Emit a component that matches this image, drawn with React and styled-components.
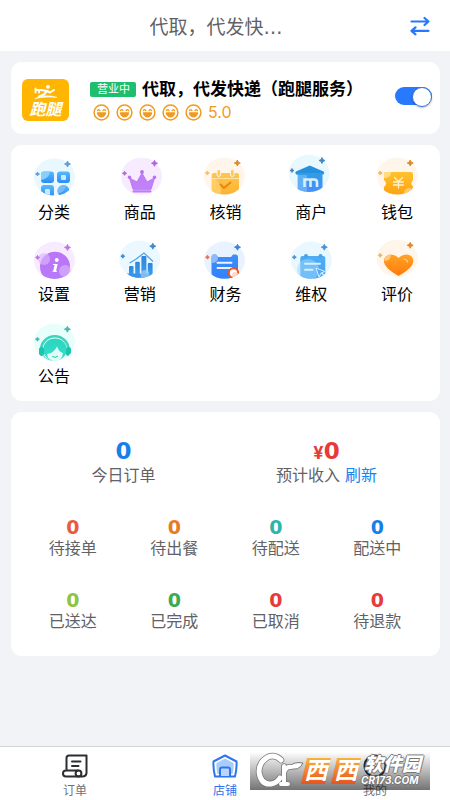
import React, { useState } from "react";
import styled, { createGlobalStyle } from "styled-components";

const GlobalStyle = createGlobalStyle`
  * {
    box-sizing: border-box;
  }
  body {
    margin: 0;
    background: #f2f3f6;
    font-family: Inter, "Noto Sans CJK SC", sans-serif;
    color: #000;
  }
  button {
    border: 0;
    padding: 0;
    background: none;
    font: inherit;
    color: inherit;
    cursor: pointer;
  }
  h1, h2, p {
    margin: 0;
  }
  svg {
    display: block;
  }
`;

/* small four-point star */
const Spark = ({ x, y, r, color }) => (
  <path
    d={`M${x} ${y - r}Q${x + 0.4} ${y - 0.4} ${x + r} ${y}Q${x + 0.4} ${y + 0.4} ${x} ${y + r}Q${x - 0.4} ${y + 0.4} ${x - r} ${y}Q${x - 0.4} ${y - 0.4} ${x} ${y - r}Z`}
    fill={color}
    stroke={color}
    strokeWidth="0.9"
  />
);

const Bubble = ({ id, cx, cy, bg, from, to, spark, small, children }) => (
  <svg width="44" height="44" viewBox="0 0 44 44" aria-hidden="true">
    <defs>
      <linearGradient id={`${id}-g`} x1="0" y1="0" x2="0" y2="1">
        <stop offset="0" stopColor={from} />
        <stop offset="1" stopColor={to} />
      </linearGradient>
      <clipPath id={`${id}-c`}>
        <ellipse cx={cx} cy={cy} rx="20.5" ry="18.6" />
      </clipPath>
    </defs>
    <ellipse cx={cx} cy={cy} rx="20.5" ry="18.6" fill={bg} />
    <g clipPath={`url(#${id}-c)`}>{children}</g>
    <Spark x={cx + 13} y={cy - 13} r={3} color={spark} />
    <Spark x={cx - 17} y={cy - 3} r={2} color={small || spark} />
  </svg>
);

const CategoryIcon = () => (
  <Bubble id="category" cx={22.5} cy={22} bg="#e9f8fe" from="#5ab8fb" to="#2b8df5" spark="#5c9fd8">
    <rect x="9" y="16.5" width="13" height="11.5" rx="3" fill="url(#category-g)" />
    <path d="M9 19.5Q9 16.5 12 16.5H18Q17 24 9 25Z" fill="#86d0fd" />
    <rect x="25" y="16.5" width="13" height="11.5" rx="3" fill="url(#category-g)" />
    <rect x="29" y="20" width="5" height="5" rx="1" fill="#c9e9fd" />
    <rect x="9" y="30" width="13" height="13" rx="3" fill="url(#category-g)" />
    <rect x="13" y="34" width="5" height="6" rx="1" fill="#c9e9fd" />
    <circle cx="31.5" cy="36" r="6" fill="url(#category-g)" />
    <path d="M25.5 36A6 6 0 0 1 34 30.5Q33 37 26 38.500Z" fill="#77bdf5" />
  </Bubble>
);

const ProductIcon = () => (
  <Bubble id="product" cx={23.5} cy={21.3} bg="#f7ebff" from="#c27cf2" to="#bf83fb" spark="#b165e0">
    <path d="M11.5 23L19 27L24 18L29 27L36.5 23L33 34.3H15Z" fill="url(#product-g)" stroke="#be79f3" strokeLinejoin="round" />
    <circle cx="11.5" cy="22.3" r="1.7" fill="#b96fe9" />
    <circle cx="24" cy="17" r="1.9" fill="#b96fe9" />
    <circle cx="36.5" cy="22.3" r="1.7" fill="#b96fe9" />
    <rect x="14.5" y="35.3" width="19" height="2.2" rx="1.1" fill="#bd7cf8" />
  </Bubble>
);

const VerifyIcon = () => (
  <Bubble id="verify" cx={21.3} cy={21} bg="#fff5eb" from="#ffc64f" to="#fcaf2d" spark="#d98b2d" small="#f8bd67">
    <rect x="8.7" y="18" width="27.3" height="26" rx="2" fill="url(#verify-g)" />
    <path d="M9 23.5H36" stroke="#ffe2a5" strokeWidth="1.2" />
    <path d="M9 24H13Q20 32 17 41H9Z" fill="#ffd474" opacity="0.7" />
    <rect x="14" y="14.5" width="3.6" height="7" rx="1.8" fill="#ffc756" stroke="#fff5eb" />
    <rect x="27.5" y="14.5" width="3.6" height="7" rx="1.8" fill="#ffc756" stroke="#fff5eb" />
    <path d="M17.5 29.5L21 33L27.5 27.5" fill="none" stroke="#e9870f" strokeWidth="2" strokeLinecap="round" strokeLinejoin="round" />
  </Bubble>
);

const MerchantIcon = () => (
  <Bubble id="merchant" cx={20} cy={18.5} bg="#e9f8fe" from="#329ce4" to="#4d8efa" spark="#4583bd">
    <path d="M20.7 10.5L34.5 16.5Q36 17.5 34.5 19.5H7Q5.5 17.5 7 16.5Z" fill="#2690df" />
    <rect x="8.7" y="18" width="24.8" height="20" fill="url(#merchant-g)" />
    <path d="M9 20H18V38H9Z" fill="#8fd0ff" opacity="0.45" />
    <path d="M15.5 32V24.5H25Q28 24.5 28 27V32M21.5 25V32" fill="none" stroke="#d9efff" strokeWidth="2.600" />
  </Bubble>
);

const WalletIcon = () => (
  <Bubble id="wallet" cx={22.2} cy={21} bg="#fff5ea" from="#ffc22e" to="#fda00d" spark="#d98b2d" small="#f8b154">
    <path d="M11 17H36Q38 17 38 19V25Q34.5 28.5 38 31.5V42H9V32Q13 28.5 9 25V19Q9 17 11 17Z" fill="url(#wallet-g)" />
    <path d="M9 19Q9 17 11 17H16Q16 23 9 23Z" fill="#ffdc80" />
    <circle cx="34" cy="38" r="5" fill="#ffcb69" />
    <path d="M19.5 22.5L23.5 26.5L27.5 22.5M23.5 26.5V33M18.5 27H28.5M18.5 30H28.5" fill="none" stroke="#fff1cf" strokeWidth="1.3" strokeLinecap="round" />
  </Bubble>
);

const SettingsIcon = () => (
  <Bubble id="settings" cx={22.5} cy={23.4} bg="#f7ebff" from="#bd74f6" to="#b47bfb" spark="#bb73e5">
    <circle cx="23" cy="29.7" r="15" fill="url(#settings-g)" />
    <circle cx="12" cy="22" r="6" fill="#dbb6fc" opacity="0.65" />
    <circle cx="33" cy="34" r="6" fill="#dbb6fc" opacity="0.65" />
    <circle cx="24.8" cy="23" r="1.9" fill="#fff" />
    <path d="M24.3 27L22.5 34.5" fill="none" stroke="#fff" strokeWidth="2.8" />
    <path d="M21 27.5H24.5M20.5 34.3H25" fill="none" stroke="#fff" strokeWidth="1.1" />
  </Bubble>
);

const MarketingIcon = () => (
  <Bubble id="marketing" cx={21.8} cy={22.2} bg="#ebf8ff" from="#2d86dc" to="#43a4f6" spark="#3989d9">
    <rect x="11" y="29" width="4.5" height="14" rx="1" fill="url(#marketing-g)" />
    <rect x="17.2" y="24.7" width="4.6" height="18" rx="1" fill="url(#marketing-g)" />
    <rect x="23.4" y="19" width="5" height="24" rx="1" fill="url(#marketing-g)" />
    <rect x="29.8" y="26" width="4.8" height="16" rx="1" fill="url(#marketing-g)" />
    <path d="M8 36.5H37V44H8Z" fill="#3a91e8" />
    <circle cx="27" cy="37.5" r="4.5" fill="#9bd0f8" opacity="0.7" />
    <path d="M11.5 26L17.5 22.5L26 16L35 24.5" fill="none" stroke="#4ba1e4" strokeWidth="1.2" />
  </Bubble>
);

const FinanceIcon = () => (
  <Bubble id="finance" cx={21.5} cy={23.2} bg="#e9f3ff" from="#3e8dfa" to="#2f80ff" spark="#3b7fdb" small="#ec714b">
    <path d="M10.5 17.5H13L15 20H28L30 17.5H32.5Q35 17.5 35 20V44H8.5V20Q8.5 17.5 10.5 17.5Z" fill="url(#finance-g)" />
    <path d="M8.5 20Q8.5 17.5 10.5 17.5H13L15 20Q15 26 8.5 26Z" fill="#8fbaf9" />
    <path d="M14.5 25.7H28.5M14.5 31H28.5" stroke="#eaf4ff" strokeWidth="2" strokeLinecap="round" />
    <circle cx="30.5" cy="36" r="4.7" fill="#fff" stroke="#f15421" strokeWidth="2" />
    <circle cx="32" cy="38" r="3" fill="#ffd8c7" />
  </Bubble>
);

const RightsIcon = () => (
  <Bubble id="rights" cx={22.3} cy={23.2} bg="#e9f8fe" from="#4facf4" to="#46a2fa" spark="#4793d4">
    <rect x="11.3" y="19" width="25" height="25" rx="2" fill="url(#rights-g)" />
    <circle cx="17" cy="19" r="2" fill="#49a3e9" />
    <circle cx="31.5" cy="19" r="2" fill="#49a3e9" />
    <circle cx="19" cy="33" r="11" fill="#9fd7fb" opacity="0.5" />
    <path d="M16 26.7H31M16 32.7H23.5" stroke="#d5efff" strokeWidth="2" strokeLinecap="round" />
    <path d="M27 31L36 34.5L32 36L30 40Z" fill="#53a8f5" stroke="#d5efff" strokeLinejoin="round" />
    <path d="M32.5 36L36 39" stroke="#d5efff" strokeWidth="1.5" />
  </Bubble>
);

const RatingIcon = () => (
  <Bubble id="rating" cx={22.2} cy={21.3} bg="#fff5ea" from="#ffa326" to="#ff7a0c" spark="#d98b2d" small="#f8b154">
    <path d="M23.5 39Q9 30.5 9 24.5Q9 18 15.5 17.5Q20.5 17.5 23.5 21Q27 17.5 31.5 17.5Q38.3 18 38.3 24.5Q38 31 23.5 39Z" fill="url(#rating-g)" />
    <path d="M10 20Q12.5 17.5 16 17.5Q16 23.5 9.5 24Z" fill="#ffc77f" />
    <path d="M29 22Q32 22.5 32.5 25" fill="none" stroke="#ffd39b" strokeWidth="1.2" strokeLinecap="round" />
  </Bubble>
);

const NoticeIcon = () => (
  <Bubble id="notice" cx={22.4} cy={23.2} bg="#e8fefb" from="#2bd5bd" to="#36dfcb" spark="#48b9ac">
    <path d="M9 31A13.8 13.8 0 0 1 36.6 31" fill="none" stroke="#3fd2bd" strokeWidth="2.5" />
    <ellipse cx="23" cy="30.5" rx="11.8" ry="11" fill="url(#notice-g)" />
    <path d="M15 35Q22 34 25 27.5Q27 33 31 34Q30 42 23 42Q16 42 15 35Z" fill="#dffdf8" />
    <rect x="7" y="28" width="5" height="9" rx="2.5" fill="#1cc5ae" />
    <rect x="34" y="28" width="5" height="9" rx="2.5" fill="#1cc5ae" />
    <path d="M11 36Q14 41 20 41.5" fill="none" stroke="#67dacb" strokeWidth="1.2" />
    <path d="M20.5 37.5Q23 39.5 25.5 37.5" fill="none" stroke="#2bbda9" strokeLinecap="round" />
  </Bubble>
);

const SwapIcon = () => (
  <svg width="20" height="20" viewBox="0 0 20 20" fill="none" stroke="#2878fb" strokeWidth="2.2" strokeLinecap="round" strokeLinejoin="round">
    <path d="M1.5 5.5H18.5L14.5 2M18.5 5.5L14.5 9" />
    <path d="M18.5 14.8H1.5L5.5 11.3M1.5 14.8L5.5 18.3" />
  </svg>
);

const Smile = () => (
  <svg width="17" height="17" viewBox="0 0 17 17" fill="none" stroke="#f29a1f" aria-hidden="true">
    <circle cx="8.5" cy="8.5" r="7.4" strokeWidth="1.5" />
    <path d="M4.5 6.6Q5.7 4.8 6.9 6.6M10.1 6.6Q11.3 4.8 12.5 6.6" strokeWidth="1.3" strokeLinecap="round" />
    <path d="M4.2 8.8H12.8Q12 13 8.5 13Q5 13 4.2 8.8Z" fill="#f29a1f" />
  </svg>
);

const RunnerIcon = () => (
  <svg width="26" height="16" viewBox="0 0 26 16" fill="none" stroke="#fff" strokeLinecap="round" strokeLinejoin="round">
    <circle cx="15" cy="2.8" r="2" fill="#fff" stroke="none" />
    <path d="M8 6L14 7L11 10.5L6 12.5M14 7L17 8.5L21 6" strokeWidth="2" />
    <path d="M2.5 4.5V8.5M2.5 6H8M6 6V8.5" strokeWidth="1.8" />
    <path d="M2 14.5Q13 9.5 24 13.5Q14 12 2 14.5Z" fill="#fff" strokeWidth="0.6" />
  </svg>
);

const OrderIcon = () => (
  <svg width="26" height="24" viewBox="0 0 26 24" fill="none" stroke="#2b2d30" strokeWidth="2" strokeLinecap="round" strokeLinejoin="round">
    <path d="M4.500 16V4Q4.500 1.500 7 1.500H24.500V19Q24 22.500 20.500 22.500H4Q1 22.500 1 19.500Q1 16.500 4 16.500H16" />
    <circle cx="16.5" cy="19.5" r="2.9" />
    <path d="M10 7.5H18.5M10 12H16.5" />
  </svg>
);

const ShopIcon = () => (
  <svg width="26" height="24" viewBox="0 0 26 24" fill="none" stroke="#2f75ec" strokeWidth="2" strokeLinecap="round" strokeLinejoin="round">
    <path d="M13 1.5L24.5 7.5Q25 14 23 22.5H3Q1 14 1.5 7.5Z" fill="#fff" />
    <path d="M13 4.5L21.5 9Q22 15 20.5 20H5.5Q4 15 4.5 9Z" fill="#a9cdfb" stroke="none" />
    <path d="M8 22V15.5Q8 13.5 10 13.5H16Q18 13.5 18 15.5V22" fill="#b9d7fc" />
  </svg>
);

const MineIcon = () => (
  <svg width="26" height="24" viewBox="0 0 26 24" fill="none" stroke="#2b2d30" strokeWidth="2">
    <circle cx="13" cy="12" r="10.5" />
    <circle cx="13" cy="9.5" r="3.8" />
    <path d="M6 19Q8 14.5 13 14.5Q18 14.5 20 19" />
  </svg>
);

const Page = styled.div`
  min-height: 100vh;
  display: flex;
  flex-direction: column;
`;

const Header = styled.header`
  height: 51px;
  padding: 0 20px;
  display: grid;
  grid-template-columns: 20px 1fr 20px;
  align-items: center;
  background: #fff;
`;

const PageTitle = styled.h1`
  padding-right: 18px;
  padding-top: 4px;
  text-align: center;
  font-size: 19px;
  line-height: 28px;
  font-weight: 400;
  color: #5f6165;
  span {
    font-family: "DejaVu Sans", sans-serif;
  }
`;

const Main = styled.main`
  flex: 1;
  padding: 11px 10px 11px 11px;
  display: flex;
  flex-direction: column;
  gap: 11px;
`;

const Card = styled.section`
  background: #fff;
  border-radius: 11px;
`;

const ShopCard = styled(Card)`
  height: 72px;
  padding: 4px 8px 0 11px;
  display: flex;
  align-items: center;
`;

const ShopLogo = styled.div`
  width: 47px;
  height: 42px;
  padding-top: 5px;
  flex: none;
  display: flex;
  flex-direction: column;
  align-items: center;
  border-radius: 6px;
  background: #ffb501;
  color: #fff;
  span {
    font-size: 16px;
    line-height: 18px;
    font-weight: 700;
    font-style: italic;
  }
`;

const ShopInfo = styled.div`
  flex: 1;
  min-width: 0;
  margin-left: 21px;
`;

const NameLine = styled.div`
  display: flex;
  align-items: center;
  gap: 6px;
  white-space: nowrap;
`;

const OpenTag = styled.span`
  padding: 0 6px 0 7px;
  border-radius: 2px;
  background: #1ebe6e;
  color: #fff;
  font-size: 11px;
  line-height: 15px;
`;

const ShopName = styled.h2`
  font-size: 17px;
  line-height: 24px;
`;

const Rating = styled.div`
  padding-left: 3px;
  display: flex;
  align-items: center;
  gap: 6px;
  color: #f29a1f;
  font-size: 16px;
  line-height: 22px;
`;

const Switch = styled.input`
  appearance: none;
  width: 37px;
  height: 18px;
  margin: 0 0 8px;
  flex: none;
  display: flex;
  justify-content: ${({ checked }) => (checked ? "flex-end" : "flex-start")};
  border-radius: 9px;
  background: ${({ checked }) => (checked ? "#2979ff" : "#e4e5e8")};
  cursor: pointer;
  &::before {
    content: "";
    width: 18px;
    height: 18px;
    border: 1px solid ${({ checked }) => (checked ? "#3677da" : "#c8c9cc")};
    border-radius: 50%;
    background: #fff;
    box-shadow: 0 1px 2px rgba(0, 0, 0, 0.25);
  }
`;

const MenuGrid = styled(Card)`
  padding-top: 10px;
  display: grid;
  grid-template-columns: repeat(5, 1fr);
`;

const MenuItem = styled.button`
  height: 82px;
  display: flex;
  flex-direction: column;
  align-items: center;
  gap: 1px;
  font-size: 16px;
  line-height: 24px;
`;

const StatsCard = styled(Card)`
  padding: 26px 12px 24px 11px;
`;

const StatsRow = styled.div`
  display: grid;
  grid-template-columns: repeat(${({ $cols }) => $cols}, 1fr);
  margin-top: ${({ $top }) => $top || 0}px;
`;

const Stat = styled.div`
  text-align: center;
  font-size: 16px;
  line-height: 22px;
  color: #606266;
`;

const StatValue = styled.p`
  height: ${({ $big }) => ($big ? 26 : 20)}px;
  font-family: "DejaVu Sans", sans-serif;
  font-size: ${({ $big }) => ($big ? 23 : 19)}px;
  line-height: ${({ $big }) => ($big ? 26 : 20)}px;
  font-weight: 700;
  color: ${({ $color }) => $color};
  small {
    font-family: Inter, sans-serif;
    font-size: 18px;
    line-height: 18px;
  }
`;

const Refresh = styled.button`
  margin-left: 5px;
  color: #1683ee;
`;

const TabBar = styled.nav`
  position: relative;
  height: 54px;
  display: grid;
  grid-template-columns: repeat(3, 1fr);
  border-top: 1px solid #d3d4d6;
  background: #fff;
`;

const Tab = styled.a`
  padding-top: 7px;
  display: flex;
  flex-direction: column;
  align-items: center;
  gap: 4px;
  font-size: 12px;
  line-height: 18px;
  text-decoration: none;
  color: ${({ $active }) => ($active ? "#2f75ec" : "#707276")};
`;

/* translucent stamp over the right end of the tab bar */
const Watermark = styled.div`
  position: absolute;
  right: 20px;
  top: 5px;
  width: 180px;
  height: 38px;
  padding-left: 6px;
  display: flex;
  align-items: center;
  background: linear-gradient(rgba(0, 0, 0, 0), rgba(0, 0, 0, 0.55));
  pointer-events: none;
`;

const OrangeBlock = styled.span`
  width: 30px;
  height: 26px;
  display: flex;
  align-items: center;
  justify-content: center;
  clip-path: polygon(20% 0, 100% 0, 80% 100%, 0 100%);
  background: linear-gradient(#f7b33c, #e8541f);
  color: #fff;
  font-size: 24px;
  line-height: 26px;
  font-weight: 700;
  font-style: italic;
`;

const Brand = styled.div`
  height: 32px;
  display: flex;
  flex-direction: column;
  color: #fff;
  font-weight: 700;
  font-style: italic;
  white-space: nowrap;
  text-shadow: 1px 0 #777, -1px 0 #777, 0 1px #777, 0 -1px #777;
  strong {
    padding-left: 3px;
    font-size: 19px;
    line-height: 20px;
  }
  span {
    font-size: 10px;
    line-height: 10px;
  }
`;

const BrandMark = () => (
  <svg width="45" height="38" viewBox="0 0 45 38" fill="none" strokeLinecap="round" overflow="visible">
    <g stroke="#777">
      <path d="M25 8Q19 2 12 5Q3 10 3 20Q5 33 15 32Q21 31 24 26" strokeWidth="6.5" />
      <path d="M28 14V31M25 32H32M28 21Q30 14 35 15" strokeWidth="5.5" />
      <path d="M33 16Q36 9 47 11Q43 20 33 16Z" fill="#fff" />
    </g>
    <g stroke="#fff">
      <path d="M25 8Q19 2 12 5Q3 10 3 20Q5 33 15 32Q21 31 24 26" strokeWidth="5" />
      <path d="M28 14V31M25 32H32M28 21Q30 14 35 15" strokeWidth="4" />
    </g>
  </svg>
);

const menu = [
  ["分类", CategoryIcon],
  ["商品", ProductIcon],
  ["核销", VerifyIcon],
  ["商户", MerchantIcon],
  ["钱包", WalletIcon],
  ["设置", SettingsIcon],
  ["营销", MarketingIcon],
  ["财务", FinanceIcon],
  ["维权", RightsIcon],
  ["评价", RatingIcon],
  ["公告", NoticeIcon],
];

const statRows = [
  [
    ["待接单", "#e85b3f"],
    ["待出餐", "#e67c27"],
    ["待配送", "#2bb5ac"],
    ["配送中", "#167fea"],
  ],
  [
    ["已送达", "#8fc442"],
    ["已完成", "#3cab50"],
    ["已取消", "#e63b3a"],
    ["待退款", "#e63b3a"],
  ],
];

const App = () => {
  const [open, setOpen] = useState(true);

  return (
    <Page>
      <GlobalStyle />
      <Header>
        <i />
        <PageTitle>
          代取，代发快<span>…</span>
        </PageTitle>
        <button type="button" aria-label="切换店铺">
          <SwapIcon />
        </button>
      </Header>

      <Main>
        <ShopCard>
          <ShopLogo>
            <RunnerIcon />
            <span>跑腿</span>
          </ShopLogo>
          <ShopInfo>
            <NameLine>
              <OpenTag>营业中</OpenTag>
              <ShopName>代取，代发快递（跑腿服务）</ShopName>
            </NameLine>
            <Rating>
              {[1, 2, 3, 4, 5].map((n) => (
                <Smile key={n} />
              ))}
              <span>5.0</span>
            </Rating>
          </ShopInfo>
          <Switch
            type="checkbox"
            role="switch"
            aria-label="营业状态"
            checked={open}
            onChange={(e) => setOpen(e.target.checked)}
          />
        </ShopCard>

        <MenuGrid>
          {menu.map(([label, Icon]) => (
            <MenuItem key={label} type="button">
              <Icon />
              {label}
            </MenuItem>
          ))}
        </MenuGrid>

        <StatsCard>
          <StatsRow $cols={2}>
            <Stat>
              <StatValue $big $color="#167fea">0</StatValue>
              今日订单
            </Stat>
            <Stat>
              <StatValue $big $color="#e63b3a">
                <small>¥</small>0
              </StatValue>
              预计收入
              <Refresh type="button">刷新</Refresh>
            </Stat>
          </StatsRow>
          {statRows.map((row) => (
            <StatsRow key={row[0][0]} $cols={4} $top={31}>
              {row.map(([label, color]) => (
                <Stat key={label}>
                  <StatValue $color={color}>0</StatValue>
                  {label}
                </Stat>
              ))}
            </StatsRow>
          ))}
        </StatsCard>
      </Main>

      <TabBar>
        <Tab href="#orders">
          <OrderIcon />
          订单
        </Tab>
        <Tab href="#shop" $active>
          <ShopIcon />
          店铺
        </Tab>
        <Tab href="#mine">
          <MineIcon />
          我的
        </Tab>
        <Watermark>
          <BrandMark />
          <OrangeBlock>西</OrangeBlock>
          <OrangeBlock>西</OrangeBlock>
          <Brand>
            <strong>软件园</strong>
            <span>CR173.COM</span>
          </Brand>
        </Watermark>
      </TabBar>
    </Page>
  );
};

export default App;
